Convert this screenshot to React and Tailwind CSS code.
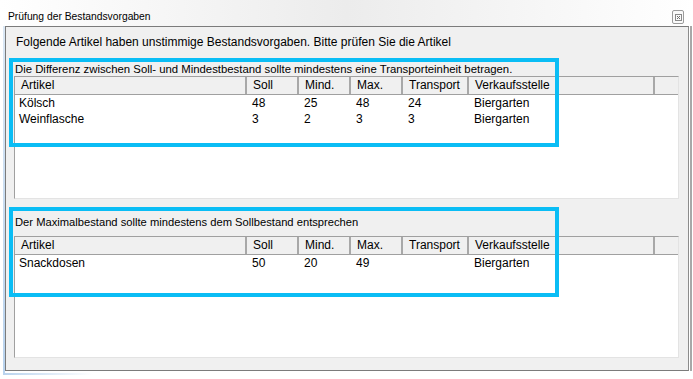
import React from "react";

const cols = [
  { key: "artikel", label: "Artikel", w: "w-[232px]" },
  { key: "soll", label: "Soll", w: "w-[52px]" },
  { key: "mind", label: "Mind.", w: "w-[52px]" },
  { key: "max", label: "Max.", w: "w-[52px]" },
  { key: "transport", label: "Transport", w: "w-[66px]" },
  { key: "stelle", label: "Verkaufsstelle", w: "w-[186px]" },
];

const section1 = [
  { artikel: "Kölsch", soll: "48", mind: "25", max: "48", transport: "24", stelle: "Biergarten" },
  { artikel: "Weinflasche", soll: "3", mind: "2", max: "3", transport: "3", stelle: "Biergarten" },
];

const section2 = [
  { artikel: "Snackdosen", soll: "50", mind: "20", max: "49", transport: "", stelle: "Biergarten" },
];

const ListView = ({ rows }) => (
  <div className="ml-[8px] w-[665px] h-full bg-white border border-t-[#a0a0a0] border-l-[#a0a0a0] border-r-[#e3e3e3] border-b-[#e3e3e3]">
    {/* column headers */}
    <div className="flex h-[18px] bg-[#f0f0f0] border-b border-[#a0a0a0]">
      {cols.map((c) => (
        <div
          key={c.key}
          className={`${c.w} shrink-0 pl-[6px] text-[12px] leading-[17px] border-r-2 border-r-[#a8a8a8]`}
        >
          {c.label}
        </div>
      ))}
      <div className="flex-1" />
    </div>
    {rows.map((r, i) => (
      <div key={i} className="flex h-[16px]">
        {cols.map((c) => (
          <div key={c.key} className={`${c.w} shrink-0 pl-[5px] text-[12px] leading-[16px] first:pl-[4px]`}>
            {r[c.key]}
          </div>
        ))}
      </div>
    ))}
  </div>
);

export default function App() {
  return (
    <div className="relative w-[693px] h-[379px] overflow-hidden bg-white text-black font-['Liberation_Sans',Arial,sans-serif]">
      {/* title bar */}
      <div className="flex justify-between h-[26px] bg-gradient-to-r from-white via-[#ececec] to-white">
        <div className="pl-[8px] pt-[10px] text-[10.3px] leading-[14px]">Prüfung der Bestandsvorgaben</div>
        <div className="mt-[10px] mr-[9px] w-[12px] h-[14px] flex items-center justify-center border border-[#9c9c9c] rounded-[2px] bg-[#fafafa]">
          <svg width="7" height="7" viewBox="0 0 7 7">
            <rect x="0.5" y="0.5" width="6" height="6" fill="none" stroke="#8a8a8a" strokeWidth="1" />
            <path d="M2 2L5 5M5 2L2 5" stroke="#6f6f6f" strokeWidth="1" />
          </svg>
        </div>
      </div>

      {/* window frame */}
      <div className="flex ml-[3px] h-[347px]">
        <div className="w-[2px] bg-gradient-to-b from-[#dbe8f5] to-[#b9d3ee]" />
        <div className="w-[684px] h-[345px] flex flex-col bg-[#f0f0f0] border border-[#7b7b7b] border-r-[#8c8c8c] shadow-[1px_0_0_#ffffff,3px_0_0_#a8a8a8]">
          <div className="pl-[10px] mt-[8px] text-[12px] leading-[14px]">
            Folgende Artikel haben unstimmige Bestandsvorgaben. Bitte prüfen Sie die Artikel
          </div>

          <div className="pl-[9px] mt-[13px] text-[11.35px] leading-[14px]">
            Die Differenz zwischen Soll- und Mindestbestand sollte mindestens eine Transporteinheit betragen.
          </div>
          <div className="h-[123px]">
            <ListView rows={section1} />
          </div>

          <div className="pl-[9px] mt-[16px] text-[11.2px] leading-[14px]">
            Der Maximalbestand sollte mindestens dem Sollbestand entsprechen
          </div>
          <div className="mt-[7px] h-[122px]">
            <ListView rows={section2} />
          </div>
        </div>
      </div>
      <div className="ml-[3px] w-[90px] h-[2px] bg-gradient-to-r from-[#b9d3ee] to-transparent" />

      {/* highlight annotations */}
      <div className="absolute left-[9px] top-[58px] w-[550px] h-[89px] border-4 border-[#0abdf5]" />
      <div className="absolute left-[9px] top-[207px] w-[550px] h-[90px] border-4 border-[#0abdf5]" />
    </div>
  );
}
